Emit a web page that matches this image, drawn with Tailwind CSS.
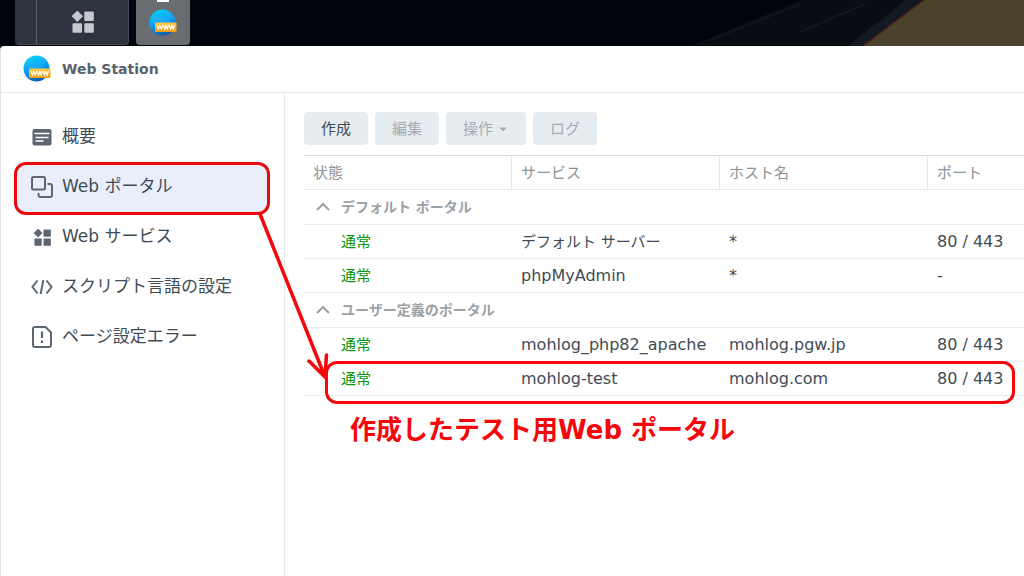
<!DOCTYPE html>
<html lang="ja">
<head>
<meta charset="utf-8">
<meta name="viewport" content="width=device-width, initial-scale=1">
<title>Web Station</title>
<script src="https://cdn.jsdelivr.net/npm/@tailwindcss/browser@4"></script>
</head>
<body class="relative flex h-screen flex-col overflow-hidden bg-[#01040d] font-['DejaVu_Sans','Noto_Sans_CJK_JP',sans-serif] text-[15px] text-[#414b55]">

<svg class="absolute h-0 w-0" aria-hidden="true">
  <defs>
    <linearGradient id="globe" x1="0.3" y1="0" x2="0.7" y2="1">
      <stop offset="0" stop-color="#05d2fb"/><stop offset="0.5" stop-color="#0a9cf0"/><stop offset="1" stop-color="#0d56ae"/>
    </linearGradient>
    <linearGradient id="plate" x1="0" y1="0" x2="0" y2="1">
      <stop offset="0" stop-color="#ffc94d"/><stop offset="1" stop-color="#f09a10"/>
    </linearGradient>
    <symbol id="web-station" viewBox="0 0 28 28">
      <circle cx="13.500" cy="13.500" r="13" fill="url(#globe)"/>
      <path d="M3 9 L9 5 L14 7 L19 3 L24 7 L20 10 L22 14 L15 17 L10 13 L5 16 Z" fill="#35b8f8" opacity="0.35"/>
      <rect x="6" y="13.500" width="21.500" height="9.500" rx="0.800" fill="url(#plate)"/>
      <path d="M8 16 l1.300 4.200 l1.500 -3.700 l1.500 3.700 l1.300 -4.200 M14.300 16 l1.300 4.200 l1.300 -3.700 l1.300 3.700 l1.300 -4.200 M20.200 16 l1.300 4.200 l1.300 -3.700 l1.300 3.700 l1.300 -4.200" fill="none" stroke="#fff" stroke-width="1.100"/>
    </symbol>
    <symbol id="tiles" viewBox="0 0 22 22">
      <path d="M5.300 -0.500 L11 5.200 L5.300 10.900 L-0.400 5.200 Z" stroke-linejoin="round"/>
      <rect x="12.300" y="0.500" width="9.500" height="9.500" rx="1"/>
      <rect x="0.500" y="12.300" width="9.500" height="9.500" rx="1"/>
      <rect x="12.300" y="12.300" width="9.500" height="9.500" rx="1"/>
    </symbol>
  </defs>
</svg>

<header class="relative flex h-[46px] shrink-0 items-start pl-[15px]">
  <svg class="absolute top-0 right-0 h-[46px] w-[374px]" viewBox="0 0 374 46" aria-hidden="true">
    <path d="M40 46 L150 0 H270 L212 46 Z" fill="#090c13"/>
    <path d="M60 40 L150 4 M150 32 L215 4" stroke="#12161d" stroke-width="2"/>
    <path d="M198 46 L256 0 H274 L213 46 Z" fill="#111a22"/>
    <path d="M213 46 L274 0 H374 V46 Z" fill="#4a422a"/>
    <path d="M213 46 L274 0" stroke="#4b231b" stroke-width="1.500"/>
  </svg>
  <div class="flex h-[45px] w-[114px] rounded-b-sm border-r border-b border-[#454b56] bg-[#2d3440]">
    <div class="w-[22px] border-r border-[#5b616b]"></div>
    <button type="button" aria-label="メイン メニュー" class="flex flex-1 items-center justify-center">
      <svg class="h-[22px] w-[22px] overflow-visible" fill="#c6c8cf"><use href="#tiles"/></svg>
    </button>
  </div>
  <button type="button" aria-label="Web Station" class="relative ml-[7px] flex h-[45px] w-[54px] items-center justify-center rounded-b-sm bg-[#696d72]">
    <span class="absolute top-0 left-[21px] h-[2px] w-3 bg-white"></span>
    <svg class="h-7 w-7"><use href="#web-station"/></svg>
  </button>
</header>

<main class="flex min-h-0 flex-1 flex-col rounded-tl border-l border-[#dfe3e6] bg-white">
  <div class="flex h-[47px] shrink-0 items-center gap-[11px] border-b border-[#e3ebf0] pl-[22px]">
    <svg class="h-7 w-7" aria-hidden="true"><use href="#web-station"/></svg>
    <h1 class="text-[14px] font-bold text-[#59626c]">Web Station</h1>
  </div>

  <div class="flex min-h-0 flex-1">
    <nav class="flex w-[284px] shrink-0 flex-col border-r border-[#e3e9ed] px-[15px] pt-[19px] text-[17px]">
      <button type="button" class="flex h-[50px] items-center gap-2 px-[14px] text-left">
        <svg class="h-6 w-6" viewBox="0 0 24 24" aria-hidden="true">
          <rect x="2.500" y="4" width="19" height="16.500" rx="2" fill="#5d6670"/>
          <path d="M4.500 8.500 H19.500 M5.500 12.500 H18.500 M5.500 16 H13.500" stroke="#fff" stroke-width="1.300"/>
        </svg>概要
      </button>
      <button type="button" aria-current="page" class="flex h-[50px] items-center gap-2 rounded-xl bg-[#e8effb] px-[14px] text-left">
        <svg class="h-6 w-6" viewBox="0 0 24 24" fill="none" stroke="#5d6670" stroke-width="2" aria-hidden="true">
          <rect x="2" y="2" width="13" height="12.500" rx="1.500"/><path d="M17.500 9 H20 Q22 9 22 11 V20 Q22 22 20 22 H10.500 Q8.500 22 8.500 20 V18"/>
        </svg>Web ポータル
      </button>
      <button type="button" class="flex h-[50px] items-center gap-2 px-[14px] text-left">
        <span class="flex w-6 justify-center"><svg class="h-[17px] w-[17px] overflow-visible" fill="#5d6670" aria-hidden="true"><use href="#tiles"/></svg></span>Web サービス
      </button>
      <button type="button" class="flex h-[50px] items-center gap-2 px-[14px] text-left">
        <svg class="h-6 w-6" viewBox="0 0 24 24" fill="none" stroke="#5d6670" stroke-width="2" aria-hidden="true">
          <path d="M7.500 5.500 L2.500 12 L7.500 18.500 M16.500 5.500 L21.500 12 L16.500 18.500 M13.300 5 L10.700 19"/>
        </svg>スクリプト言語の設定
      </button>
      <button type="button" class="flex h-[50px] items-center gap-2 px-[14px] text-left">
        <svg class="h-6 w-6" viewBox="0 0 24 24" fill="none" stroke="#5d6670" stroke-width="2" aria-hidden="true">
          <path d="M5 2 H15.500 L21 7.500 V20 Q21 22 19 22 H5 Q3 22 3 20 V4 Q3 2 5 2 Z"/><path d="M12 6.500 V13 M12 15.500 V18" stroke-width="2.200"/>
        </svg>ページ設定エラー
      </button>
    </nav>

    <section class="min-w-0 flex-1 pt-[19px] pl-[19px]">
      <div class="flex gap-[7px] text-[15px]">
        <button type="button" class="h-[33px] w-16 rounded bg-[#e7ecf1] pt-px">作成</button>
        <button type="button" disabled class="h-[33px] w-16 rounded bg-[#e7ecf1] pt-px text-[#a6abb0]">編集</button>
        <button type="button" disabled class="flex h-[33px] w-20 items-center justify-center gap-1 rounded bg-[#e7ecf1] pt-px text-[#a6abb0]">操作
          <svg class="h-2 w-3" viewBox="0 0 12 8" aria-hidden="true"><path d="M2 2.500 H10 L6 6.200 Z" fill="#a6abb0"/></svg>
        </button>
        <button type="button" disabled class="h-[33px] w-16 rounded bg-[#e7ecf1] pt-px text-[#a6abb0]">ログ</button>
      </div>

      <table class="mt-[10px] w-full table-fixed border-separate border-spacing-0 border-t border-[#d3dbe0] text-left leading-5 [&_td]:border-b [&_td]:border-[#e9edf0] [&_td]:py-0 [&_td]:pl-[9px] [&_th]:border-b [&_th]:border-[#e3eaee] [&_th]:py-0 [&_th]:pl-[9px] [&_th]:font-normal">
        <colgroup><col class="w-[208px]"><col class="w-[208px]"><col class="w-[208px]"><col></colgroup>
        <thead>
          <tr class="h-[34px] text-[15px] text-[#8d9399]">
            <th scope="col" class="border-r">状態</th><th scope="col" class="border-r">サービス</th><th scope="col" class="border-r">ホスト名</th><th scope="col">ポート</th>
          </tr>
        </thead>
        <tbody class="text-[16px]">
          <tr class="h-[35px]"><td colspan="4">
            <button type="button" aria-expanded="true" class="flex items-center gap-2 text-[14px] font-bold text-[#9ca1a6]">
              <svg class="h-5 w-5" viewBox="0 0 20 20" fill="none" stroke="#9ca1a6" stroke-width="2" aria-hidden="true"><path d="M4 13 L10 7 L16 13"/></svg>デフォルト ポータル
            </button></td></tr>
          <tr class="h-[34px]"><td><span class="pl-7 text-[15px] text-[#0a960c]">通常</span></td><td class="text-[15px]">デフォルト サーバー</td><td>*</td><td>80 / 443</td></tr>
          <tr class="h-[34px]"><td><span class="pl-7 text-[15px] text-[#0a960c]">通常</span></td><td>phpMyAdmin</td><td>*</td><td>-</td></tr>
        </tbody>
        <tbody class="text-[16px]">
          <tr class="h-[35px]"><td colspan="4">
            <button type="button" aria-expanded="true" class="flex items-center gap-2 text-[14px] font-bold text-[#9ca1a6]">
              <svg class="h-5 w-5" viewBox="0 0 20 20" fill="none" stroke="#9ca1a6" stroke-width="2" aria-hidden="true"><path d="M4 13 L10 7 L16 13"/></svg>ユーザー定義のポータル
            </button></td></tr>
          <tr class="h-[34px]"><td><span class="pl-7 text-[15px] text-[#0a960c]">通常</span></td><td class="whitespace-nowrap">mohlog_php82_apache</td><td>mohlog.pgw.jp</td><td>80 / 443</td></tr>
          <tr class="h-[34px]"><td><span class="pl-7 text-[15px] text-[#0a960c]">通常</span></td><td>mohlog-test</td><td>mohlog.com</td><td>80 / 443</td></tr>
        </tbody>
      </table>
    </section>
  </div>
</main>

<!-- Red callouts drawn over the window -->
<div class="pointer-events-none absolute inset-0">
  <div class="absolute top-[162px] left-[14px] h-[53px] w-[256px] rounded-xl border-3 border-[#e90a0d]"></div>
  <div class="absolute top-[361px] right-[9px] left-[325px] h-[43px] rounded-xl border-3 border-[#f3080b]"></div>
  <svg class="absolute top-[210px] left-[250px] h-[180px] w-[90px]" viewBox="250 210 90 180" fill="none" stroke="#f3080b" stroke-width="3.500" stroke-linecap="round" aria-hidden="true">
    <path d="M260 214 L325 377 M309 361 L325 377 L326.500 355"/>
  </svg>
  <p class="absolute top-[410px] left-[350px] text-[26px] leading-10 font-bold whitespace-nowrap text-[#f5060a]">作成したテスト用Web ポータル</p>
</div>
</body>
</html>
